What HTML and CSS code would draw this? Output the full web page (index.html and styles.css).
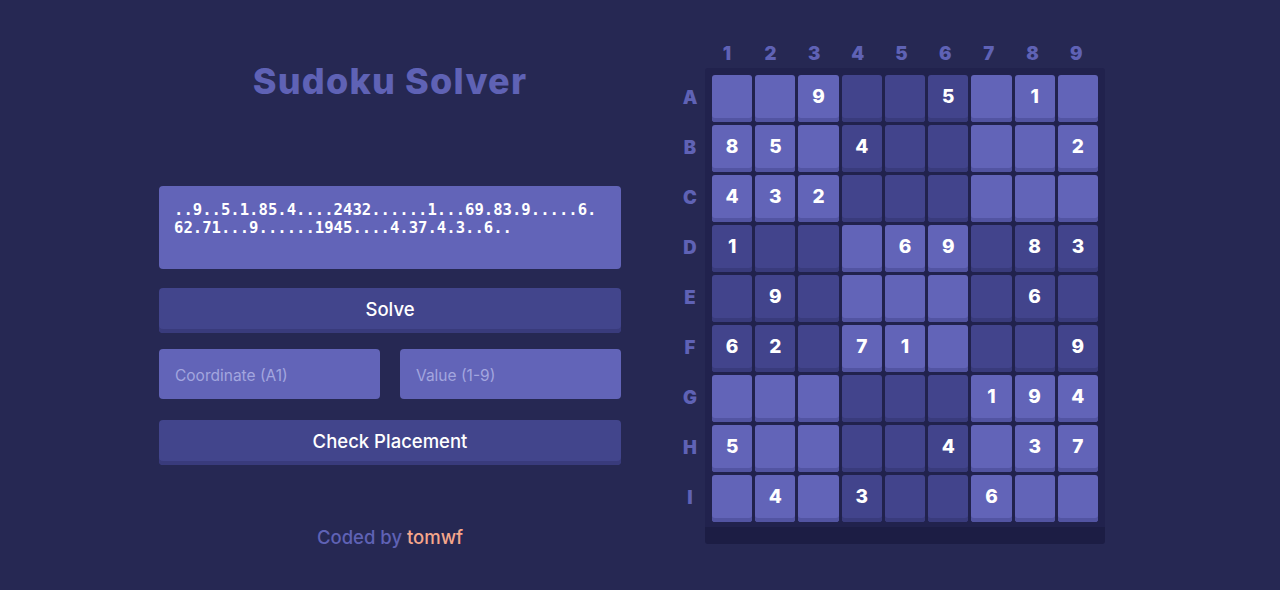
FILE: index.html
```html
<!DOCTYPE html>
<html lang="en">
<head>
<meta charset="utf-8">
<title>Sudoku Solver</title>
<link rel="stylesheet" href="styles.css">
</head>
<body>
<main class="app">
  <section class="controls">
    <h1 class="title">Sudoku Solver</h1>
    <textarea class="puzzle-input" rows="4" spellcheck="false">..9..5.1.85.4....2432......1...69.83.9.....6.62.71...9......1945....4.37.4.3..6..</textarea>
    <button class="btn btn-solve" type="button">Solve</button>
    <div class="check-fields">
      <input class="field" type="text" placeholder="Coordinate (A1)">
      <input class="field" type="text" placeholder="Value (1-9)">
    </div>
    <button class="btn btn-check" type="button">Check Placement</button>
    <p class="credit">Coded by <span class="credit-name">tomwf</span></p>
  </section>

  <section class="board-wrap">
    <div class="col-labels">
      <span>1</span><span>2</span><span>3</span><span>4</span><span>5</span><span>6</span><span>7</span><span>8</span><span>9</span>
    </div>
    <div class="row-labels">
      <span>A</span><span>B</span><span>C</span><span>D</span><span>E</span><span>F</span><span>G</span><span>H</span><span>I</span>
    </div>
    <div class="board">
      <div class="cell"></div><div class="cell"></div><div class="cell">9</div><div class="cell dark"></div><div class="cell dark"></div><div class="cell dark">5</div><div class="cell"></div><div class="cell">1</div><div class="cell"></div>
      <div class="cell">8</div><div class="cell">5</div><div class="cell"></div><div class="cell dark">4</div><div class="cell dark"></div><div class="cell dark"></div><div class="cell"></div><div class="cell"></div><div class="cell">2</div>
      <div class="cell">4</div><div class="cell">3</div><div class="cell">2</div><div class="cell dark"></div><div class="cell dark"></div><div class="cell dark"></div><div class="cell"></div><div class="cell"></div><div class="cell"></div>
      <div class="cell dark">1</div><div class="cell dark"></div><div class="cell dark"></div><div class="cell"></div><div class="cell">6</div><div class="cell">9</div><div class="cell dark"></div><div class="cell dark">8</div><div class="cell dark">3</div>
      <div class="cell dark"></div><div class="cell dark">9</div><div class="cell dark"></div><div class="cell"></div><div class="cell"></div><div class="cell"></div><div class="cell dark"></div><div class="cell dark">6</div><div class="cell dark"></div>
      <div class="cell dark">6</div><div class="cell dark">2</div><div class="cell dark"></div><div class="cell">7</div><div class="cell">1</div><div class="cell"></div><div class="cell dark"></div><div class="cell dark"></div><div class="cell dark">9</div>
      <div class="cell"></div><div class="cell"></div><div class="cell"></div><div class="cell dark"></div><div class="cell dark"></div><div class="cell dark"></div><div class="cell">1</div><div class="cell">9</div><div class="cell">4</div>
      <div class="cell">5</div><div class="cell"></div><div class="cell"></div><div class="cell dark"></div><div class="cell dark"></div><div class="cell dark">4</div><div class="cell"></div><div class="cell">3</div><div class="cell">7</div>
      <div class="cell"></div><div class="cell">4</div><div class="cell"></div><div class="cell dark">3</div><div class="cell dark"></div><div class="cell dark"></div><div class="cell">6</div><div class="cell"></div><div class="cell"></div>
    </div>
  </section>
</main>
</body>
</html>
```

FILE: styles.css
```css
html, body {
  margin: 0;
  padding: 0;
}

body {
  background: #262853;
  font-family: Inter, "Noto Sans", sans-serif;
  color: #ffffff;
  height: 590px;
  overflow: hidden;
}

.app {
  display: flex;
  align-items: flex-start;
  gap: 54px;
  padding-left: 159px;
}

/* ---------- left column ---------- */
.controls {
  width: 462px;
  display: flex;
  flex-direction: column;
  padding-top: 60px;
}

.title {
  margin: 0 0 86px;
  height: 40px;
  line-height: 42px;
  font-size: 36px;
  font-weight: 800;
  text-align: center;
  color: #5f62b5;
  letter-spacing: 1.2px;
}

.puzzle-input {
  display: block;
  box-sizing: border-box;
  width: 100%;
  height: 83px;
  margin: 0 0 19px;
  padding: 15px 21px 8px 15px;
  border: 0;
  border-radius: 4px;
  background: #6264b8;
  color: #ffffff;
  font-family: "DejaVu Sans Mono", monospace;
  font-weight: 700;
  font-size: 15.6px;
  line-height: 18px;
  resize: none;
  outline: none;
  overflow: hidden;
}

.btn {
  display: block;
  box-sizing: border-box;
  width: 100%;
  height: 45px;
  padding: 0 0 3px;
  border: 0;
  border-radius: 4px;
  background: #42458c;
  box-shadow: inset 0 -4px 0 #393b7c;
  color: #ffffff;
  font-family: Inter, "Noto Sans", sans-serif;
  font-size: 18.5px;
  font-weight: 500;
  cursor: pointer;
}

.btn-solve {
  margin-bottom: 16px;
}

.check-fields {
  display: flex;
  gap: 20px;
  margin-bottom: 21px;
}

.field {
  flex: 1;
  min-width: 0;
  box-sizing: border-box;
  height: 50px;
  padding: 2px 16px 0;
  border: 0;
  border-radius: 4px;
  background: #6264b8;
  color: #ffffff;
  font-family: Inter, "Noto Sans", sans-serif;
  font-size: 15.5px;
  outline: none;
}

.field::placeholder {
  color: #a3a6df;
}

.credit {
  margin: 60px 0 0;
  line-height: 24px;
  font-size: 18.5px;
  font-weight: 500;
  text-align: center;
  color: #5f62b5;
}

.credit-name {
  color: #f6a78b;
}

/* ---------- board ---------- */
.board-wrap {
  display: grid;
  grid-template-columns: 30px 400px;
  grid-template-rows: 26px auto;
  row-gap: 2px;
  padding-top: 40px;
}

.col-labels {
  grid-column: 2;
  grid-row: 1;
  display: grid;
  grid-template-columns: repeat(9, 1fr);
  padding-right: 7px;
  line-height: 26px;
}

.row-labels {
  grid-column: 1;
  grid-row: 2;
  display: grid;
  grid-template-rows: repeat(9, 43px);
  row-gap: 7px;
  padding-top: 7px;
  align-content: start;
}

.col-labels span,
.row-labels span {
  text-align: center;
  font-size: 18.5px;
  font-weight: 900;
  color: #5f62b5;
}

.row-labels span {
  line-height: 44px;
}

.board {
  grid-column: 2;
  grid-row: 2;
  display: grid;
  grid-template-columns: repeat(9, 1fr);
  gap: 3px;
  padding: 7px 7px 5px;
  background: #21224d;
  border-bottom: 17px solid #1c1d44;
  border-radius: 3px;
}

.cell {
  box-sizing: border-box;
  height: 47px;
  padding-bottom: 4px;
  display: flex;
  align-items: center;
  justify-content: center;
  border-radius: 3px;
  background: #6264b8;
  box-shadow: inset 0 -4px 0 #5254a2;
  font-size: 19px;
  font-weight: 800;
  color: #ffffff;
}

.cell.dark {
  background: #42448c;
  box-shadow: inset 0 -4px 0 #393b7c;
}
```
